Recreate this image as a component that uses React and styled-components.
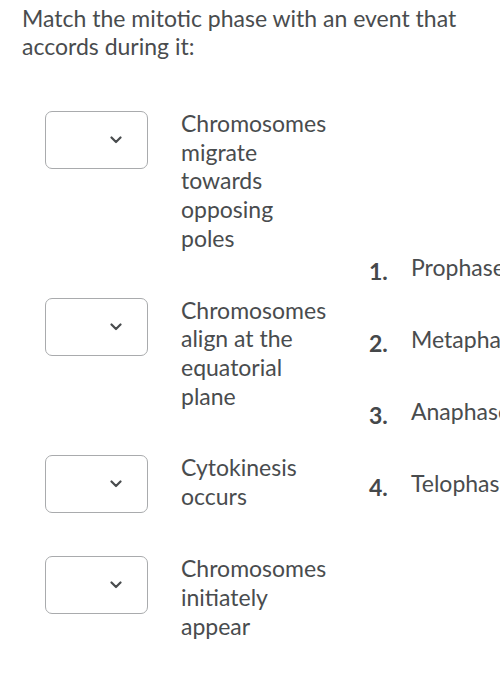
import React from 'react'
import styled, { createGlobalStyle } from 'styled-components'

const GlobalStyle = createGlobalStyle`
	html, body {
		margin: 0;
		padding: 0;
		background: #ffffff;
		overflow: hidden;
	}
	body {
		font-family: Lato, 'Open Sans', sans-serif;
		color: #494c4e;
	}
`

const events = [
	'Chromosomes migrate towards opposing poles',
	'Chromosomes align at the equatorial plane',
	'Cytokinesis occurs',
	'Chromosomes initiately appear',
]

const phases = ['Prophase', 'Metaphase', 'Anaphase', 'Telophase']

const Page = styled.div`
	width: 500px;
	height: 700px;
	overflow: hidden;
	padding: 4px 0 0 22px;
	box-sizing: border-box;
`

const Question = styled.p`
	margin: 0;
	font-size: 23px;
	line-height: 28px;
	width: 470px;
`

const Matching = styled.div`
	display: flex;
	align-items: center;
	margin-top: 49px;
	padding-left: 23px;
`

const EventList = styled.div`
	display: flex;
	flex-direction: column;
	gap: 43px;
	flex-shrink: 0;
`

const EventRow = styled.div`
	display: flex;
	align-items: flex-start;
	gap: 33px;
`

const Select = styled.div`
	width: 103px;
	height: 58px;
	box-sizing: border-box;
	border: 1.5px solid #a9abad;
	border-radius: 7px;
	display: flex;
	align-items: center;
	justify-content: flex-end;
	padding-right: 25px;
	margin: 2px 0 -2px;
	flex-shrink: 0;
`

const EventText = styled.div`
	width: 150px;
	font-size: 23px;
	line-height: 28.7px;
`

const PhaseList = styled.ol`
	list-style: none;
	margin: 0 0 0 38px;
	padding: 6px 0 0;
	display: flex;
	flex-direction: column;
	gap: 39px;
	white-space: nowrap;
`

const Phase = styled.li`
	display: flex;
	align-items: flex-start;
	font-size: 23px;
	line-height: 29px;
`

const Num = styled.span`
	width: 42px;
	margin-top: 4px;
	font-weight: 700;
	color: #45484a;
	flex-shrink: 0;
`

const Chevron = () => (
	<svg width="12" height="8" viewBox="0 0 12 8">
		<path d="M1.5 1.5 L6 6 L10.5 1.5" fill="none" stroke="#494c4e" strokeWidth="2.2" strokeLinecap="round" strokeLinejoin="round" />
	</svg>
)

export default function App() {
	return (
		<Page>
			<GlobalStyle />
			<Question>Match the mitotic phase with an event that accords during it:</Question>
			<Matching>
				<EventList>
					{events.map((text) => (
						<EventRow key={text}>
							<Select>
								<Chevron />
							</Select>
							<EventText>{text}</EventText>
						</EventRow>
					))}
				</EventList>
				<PhaseList>
					{phases.map((p, i) => (
						<Phase key={p}>
							<Num>{i + 1}.</Num>
							<span>{p}</span>
						</Phase>
					))}
				</PhaseList>
			</Matching>
		</Page>
	)
}
